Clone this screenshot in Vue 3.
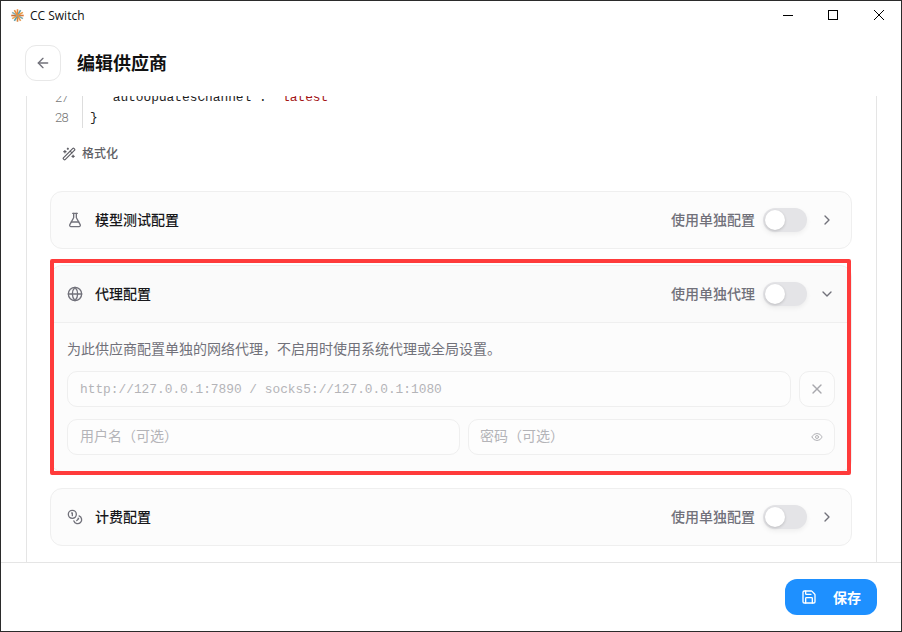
<script setup>
const logoSpokes = [
  ['#e8873a', 0], ['#5f9ea8', 30], ['#e8a04a', 60], ['#d9793a', 90], ['#7fa8a8', 120], ['#e89a50', 150],
  ['#d6823c', 180], ['#5f9ea8', 210], ['#eba657', 240], ['#c96f35', 270], ['#86aeb0', 300], ['#e58f3f', 330],
]
</script>

<template>
  <div class="window">
    <div class="titlebar">
      <svg class="logo" viewBox="0 0 24 24" width="13" height="13" aria-hidden="true">
        <line
          v-for="s in logoSpokes"
          :key="s[1]"
          x1="12" y1="12" x2="12" y2="0.5"
          :stroke="s[0]"
          stroke-width="3"
          :transform="`rotate(${s[1]} 12 12)`"
        />
      </svg>
      <span class="app-name">CC Switch</span>
      <div class="win-controls">
        <svg width="10" height="10" viewBox="0 0 10 10"><path d="M0 5.5h10" stroke="#000" fill="none" /></svg>
        <svg width="10" height="10" viewBox="0 0 10 10"><rect x="0.5" y="0.5" width="9" height="9" stroke="#000" fill="none" /></svg>
        <svg class="close" width="10" height="10" viewBox="0 0 10 10"><path d="M0 0l10 10M10 0L0 10" stroke="#000" fill="none" /></svg>
      </div>
    </div>

    <header class="page-header">
      <button class="back-btn" type="button">
        <svg class="icon" width="16" height="16" viewBox="0 0 24 24"><path d="m12 19-7-7 7-7" /><path d="M19 12H5" /></svg>
      </button>
      <h1>编辑供应商</h1>
    </header>

    <main class="scroller">
      <div class="form-card">
        <div class="code">
          <div class="code-line"><span class="gutter">27</span><span class="code-text indent">"autoUpdatesChannel": <span class="str">"latest"</span></span></div>
          <div class="code-line"><span class="gutter">28</span><span class="code-text">}</span></div>
        </div>
        <button class="format-btn" type="button">
          <svg class="icon" width="14" height="14" viewBox="0 0 24 24">
            <path d="m21.64 3.64-1.28-1.28a1.21 1.21 0 0 0-1.72 0L2.36 18.64a1.21 1.21 0 0 0 0 1.72l1.28 1.28a1.2 1.2 0 0 0 1.72 0L21.64 5.36a1.2 1.2 0 0 0 0-1.72" />
            <path d="m14 7 3 3" /><path d="M5 6v4" /><path d="M19 14v4" /><path d="M10 2v2" /><path d="M7 8H3" /><path d="M21 16h-4" /><path d="M11 3H9" />
          </svg>
          格式化
        </button>

        <div class="sections">
          <section class="panel">
            <div class="panel-head">
              <svg class="icon head-icon" width="16" height="16" viewBox="0 0 24 24">
                <path d="M14 2v6a2 2 0 0 0 .245.96l5.51 10.08A2 2 0 0 1 18 22H6a2 2 0 0 1-1.755-2.96l5.51-10.08A2 2 0 0 0 10 8V2" />
                <path d="M6.453 15h11.094" /><path d="M8.5 2h7" />
              </svg>
              <span class="panel-title">模型测试配置</span>
              <span class="panel-label">使用单独配置</span>
              <span class="toggle"><span class="knob"></span></span>
              <svg class="icon chev" width="16" height="16" viewBox="0 0 24 24"><path d="m9 18 6-6-6-6" /></svg>
            </div>
          </section>

          <section class="panel proxy">
            <div class="panel-head open">
              <svg class="icon head-icon" width="16" height="16" viewBox="0 0 24 24">
                <circle cx="12" cy="12" r="10" />
                <path d="M12 2a14.5 14.5 0 0 0 0 20 14.5 14.5 0 0 0 0-20" /><path d="M2 12h20" />
              </svg>
              <span class="panel-title">代理配置</span>
              <span class="panel-label">使用单独代理</span>
              <span class="toggle"><span class="knob"></span></span>
              <svg class="icon chev" width="16" height="16" viewBox="0 0 24 24"><path d="m6 9 6 6 6-6" /></svg>
            </div>
            <div class="panel-body">
              <p class="desc">为此供应商配置单独的网络代理，不启用时使用系统代理或全局设置。</p>
              <div class="field-row">
                <div class="field grow mono">http://127.0.0.1:7890 / socks5://127.0.0.1:1080</div>
                <button class="clear-btn" type="button">
                  <svg class="icon" width="16" height="16" viewBox="0 0 24 24"><path d="M18 6 6 18" /><path d="m6 6 12 12" /></svg>
                </button>
              </div>
              <div class="field-row">
                <div class="field user"><span>用户名（可选）</span></div>
                <div class="field grow pass">
                  <span>密码（可选）</span>
                  <svg class="icon" width="12" height="12" viewBox="0 0 24 24">
                    <path d="M2.062 12.348a1 1 0 0 1 0-.696 10.75 10.75 0 0 1 19.876 0 1 1 0 0 1 0 .696 10.75 10.75 0 0 1-19.876 0" />
                    <circle cx="12" cy="12" r="3" />
                  </svg>
                </div>
              </div>
            </div>
            <div class="highlight"></div>
          </section>

          <section class="panel">
            <div class="panel-head">
              <svg class="icon head-icon" width="16" height="16" viewBox="0 0 24 24">
                <circle cx="8" cy="8" r="6" />
                <path d="M18.09 10.37A6 6 0 1 1 10.34 18" /><path d="M7 6h1v4" /><path d="m16.71 13.88.7.71-2.82 2.82" />
              </svg>
              <span class="panel-title">计费配置</span>
              <span class="panel-label">使用单独配置</span>
              <span class="toggle"><span class="knob"></span></span>
              <svg class="icon chev" width="16" height="16" viewBox="0 0 24 24"><path d="m9 18 6-6-6-6" /></svg>
            </div>
          </section>
        </div>
      </div>
    </main>

    <footer class="page-footer">
      <button class="save-btn" type="button">
        <svg class="icon" width="16" height="16" viewBox="0 0 24 24">
          <path d="M15.2 3a2 2 0 0 1 1.4.6l3.8 3.8a2 2 0 0 1 .6 1.4V19a2 2 0 0 1-2 2H5a2 2 0 0 1-2-2V5a2 2 0 0 1 2-2z" />
          <path d="M17 21v-7a1 1 0 0 0-1-1H8a1 1 0 0 0-1 1v7" /><path d="M7 3v4a1 1 0 0 0 1 1h7" />
        </svg>
        保存
      </button>
    </footer>
  </div>
</template>

<style>
html, body { margin: 0; background: #2b2b2b; }
</style>

<style scoped>
* { box-sizing: border-box; }
.window {
  width: 902px;
  height: 632px;
  border: 1px solid #2b2b2b;
  background: #fff;
  display: flex;
  flex-direction: column;
  overflow: hidden;
  font-family: Inter, "Noto Sans CJK SC", sans-serif;
  color: #18181b;
}
.icon {
  fill: none;
  stroke: currentColor;
  stroke-width: 2;
  stroke-linecap: round;
  stroke-linejoin: round;
  flex: none;
  display: block;
}
button { font-family: inherit; padding: 0; }

.titlebar {
  height: 29px;
  flex: none;
  display: flex;
  align-items: center;
  padding-left: 10px;
}
.logo { display: block; margin-right: 6px; }
.app-name { font: 12px/16px "Open Sans", sans-serif; color: #111; }
.win-controls {
  margin: -1px 0 0 auto;
  display: flex;
  gap: 35px;
  padding-right: 17px;
}
.win-controls svg { display: block; }
.win-controls .close { margin-left: 1px; }

.page-header {
  height: 66px;
  flex: none;
  display: flex;
  align-items: center;
  gap: 16px;
  padding: 0 24px;
}
.back-btn {
  width: 36px;
  height: 36px;
  border: 1px solid #e8e8e8;
  border-radius: 11px;
  background: #fff;
  color: #71717a;
  display: flex;
  align-items: center;
  justify-content: center;
}
.page-header h1 { margin: 1px 0 0; font-size: 18px; line-height: 24px; font-weight: 600; color: #111; }

.scroller {
  flex: 1;
  min-height: 0;
  overflow: hidden;
  padding: 0 24px 0 25px;
}
.form-card {
  margin-top: -40px;
  height: 520px;
  border: 1px solid #e5e5e5;
  border-radius: 12px;
  padding: 31px 24px 0 23px;
}
.code {
  font: 12.83px/20px "Liberation Mono", monospace;
  color: #1f1f1f;
}
.code-line { display: flex; height: 20px; }
.gutter {
  width: 33px;
  padding-right: 14px;
  border-right: 1px solid #ddd;
  color: #777;
  text-align: right;
  flex: none;
  font: 300 13px/20px Roboto, sans-serif;
  letter-spacing: -0.7px;
}
.code-text { white-space: pre; padding-left: 7px; }
.code-text.indent { padding-left: 22px; }
.str { color: #a31515; }
.format-btn {
  margin: 11px 0 0 12px;
  height: 30px;
  display: flex;
  align-items: center;
  gap: 6px;
  border: 0;
  background: none;
  font-size: 12px;
  line-height: 16px;
  font-weight: 500;
  color: #5f5f66;
}
.sections {
  margin-top: 22px;
  display: flex;
  flex-direction: column;
  gap: 16px;
}
.panel {
  position: relative;
  border: 1px solid #efefef;
  border-radius: 12px;
  background: #fcfcfc;
}
.panel-head {
  height: 56px;
  display: flex;
  align-items: center;
  padding: 0 16px;
}
.panel-head.open {
  height: 57px;
  border-bottom: 1px solid #efefef;
  background: #fafafa;
  border-radius: 12px 12px 0 0;
}
.head-icon { color: #71717a; margin-right: 12px; }
.panel-title { font-size: 14px; line-height: 20px; font-weight: 500; color: #18181b; }
.panel-label { margin-left: auto; font-size: 14px; line-height: 20px; font-weight: 500; color: #71717a; }
.toggle {
  width: 44px;
  height: 24px;
  margin-left: 8px;
  padding: 2px;
  border-radius: 12px;
  background: #e4e4e7;
  box-shadow: 0 2px 5px rgba(0, 0, 0, 0.06);
  display: block;
}
.knob {
  display: block;
  width: 20px;
  height: 20px;
  border-radius: 50%;
  background: #fff;
  box-shadow: 0 1px 3px rgba(0, 0, 0, 0.18);
}
.chev { color: #71717a; margin-left: 12px; }

.panel-body { padding: 16px; }
.desc { margin: 0 0 12px; font-size: 14px; line-height: 20px; color: #71717a; }
.field-row { display: flex; gap: 8px; }
.field-row + .field-row { margin-top: 12px; }
.field {
  height: 36px;
  border: 1px solid #efefef;
  border-radius: 10px;
  background: #fdfdfd;
  padding: 0 12px;
  display: flex;
  align-items: center;
  font-size: 14px;
  color: #b4b4b8;
}
.field span { line-height: 20px; margin-bottom: 3px; }
.grow { flex: 1; min-width: 0; }
.mono { font-family: "Liberation Mono", monospace; font-size: 12.83px; }
.user { width: 393px; flex: none; }
.pass { justify-content: space-between; padding-left: 11px; padding-right: 11px; }
.clear-btn {
  width: 36px;
  height: 36px;
  flex: none;
  border: 1px solid #efefef;
  border-radius: 10px;
  background: #fdfdfd;
  color: #a8a8ad;
  display: flex;
  align-items: center;
  justify-content: center;
}
.highlight {
  position: absolute;
  top: -7px;
  left: -1px;
  right: 0;
  bottom: -4px;
  border: 4px solid #ff3b3b;
  border-radius: 2px;
  pointer-events: none;
}

.page-footer {
  height: 69px;
  flex: none;
  border-top: 1px solid #e5e5e5;
  background: #fff;
  display: flex;
  align-items: center;
  justify-content: flex-end;
  padding: 0 24px 0 0;
}
.save-btn {
  width: 92px;
  height: 36px;
  border: 0;
  border-radius: 12px;
  background: #1e90ff;
  color: #fff;
  font-size: 14px;
  font-weight: 600;
  display: flex;
  align-items: center;
  justify-content: center;
  gap: 16px;
}
</style>
